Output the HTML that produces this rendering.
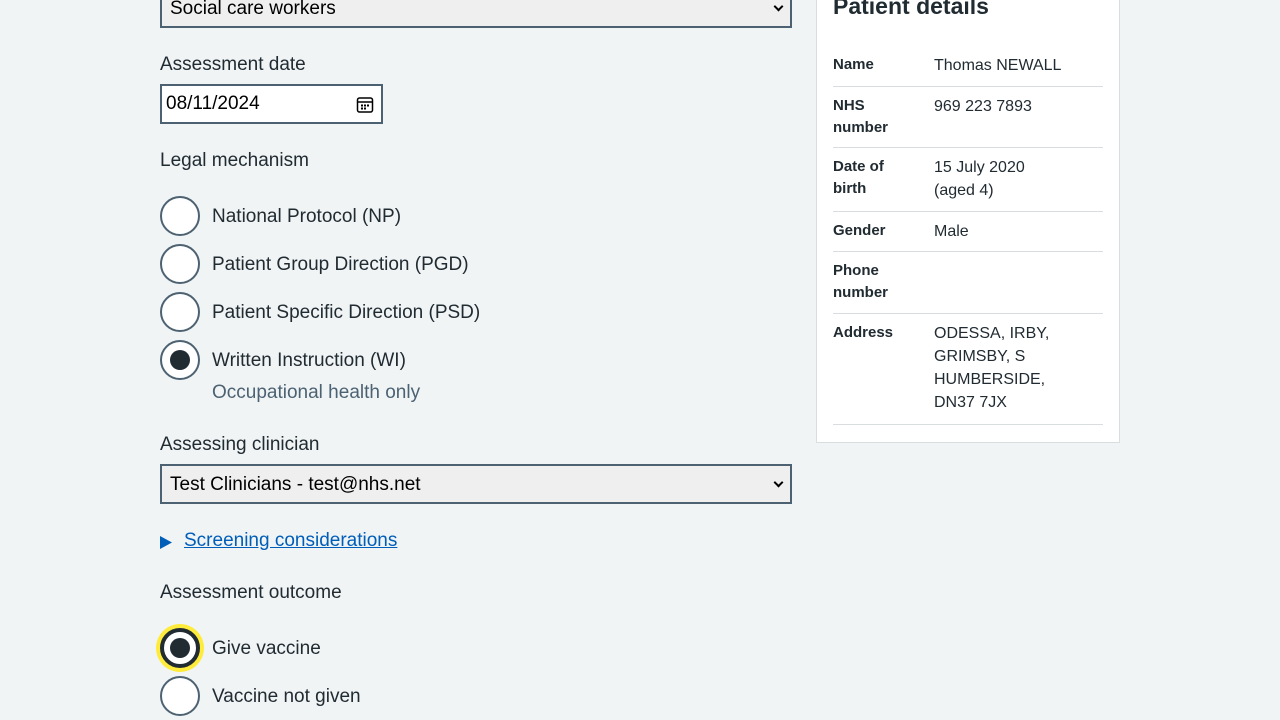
<!DOCTYPE html>
<html><head><meta charset="utf-8"><style>
*{margin:0;padding:0;box-sizing:border-box}
body{width:1280px;height:720px;background:#f0f4f5;font-family:"Liberation Sans",sans-serif;color:#212b32;position:relative;overflow:hidden}
.a{position:absolute;white-space:nowrap}
.lbl{font-size:19px}
.sel{position:absolute;left:160px;width:632px;height:40px;border:2px solid #4c6272;background:#efefef;font-size:19px;padding:8px 8px;color:#000}
.sel:after{content:"";position:absolute;right:8px;top:13px;width:5px;height:5px;border-right:2px solid #000;border-bottom:2px solid #000;transform:rotate(45deg)}
.r{position:absolute;left:160px;width:40px;height:40px;border:2px solid #4c6272;border-radius:50%;background:#fff}
.r.on:after{content:"";position:absolute;left:8px;top:8px;width:20px;height:20px;border-radius:50%;background:#212b32}
.rl{position:absolute;left:212px;font-size:19px;white-space:nowrap}
.panel{position:absolute;left:816px;top:-20px;width:304px;height:463px;background:#fff;border:1px solid #d8dde0}
.row{position:absolute;left:833px;width:270px;border-bottom:1px solid #d8dde0}
.k{position:absolute;left:833px;font-size:15px;font-weight:bold;line-height:22px}
.v{position:absolute;left:934px;font-size:16px;line-height:23px}
</style></head><body>
<div class="sel" style="top:-12px">Social care workers</div>
<div class="a lbl" style="left:160px;top:54px">Assessment date</div>
<div class="a" style="left:160px;top:84px;width:223px;height:40px;border:2px solid #4c6272;background:#fff;font-size:19px;padding:7px 4px;color:#000">08/11/2024
<svg style="position:absolute;right:7px;top:10px" width="18" height="18" viewBox="0 0 18 18"><rect x="1.5" y="2" width="15" height="14" rx="2" fill="none" stroke="#000" stroke-width="1.5"/><line x1="2" y1="6" x2="16" y2="6" stroke="#000" stroke-width="1.5"/><g fill="#000"><rect x="5" y="8.5" width="2" height="2"/><rect x="8" y="8.5" width="2" height="2"/><rect x="11" y="8.5" width="2" height="2"/><rect x="5" y="11.5" width="2" height="2"/><rect x="8" y="11.5" width="2" height="2"/></g></svg></div>
<div class="a lbl" style="left:160px;top:150px">Legal mechanism</div>
<div class="r" style="top:196px"></div><div class="rl" style="top:206px">National Protocol (NP)</div>
<div class="r" style="top:244px"></div><div class="rl" style="top:254px">Patient Group Direction (PGD)</div>
<div class="r" style="top:292px"></div><div class="rl" style="top:302px">Patient Specific Direction (PSD)</div>
<div class="r on" style="top:340px"></div><div class="rl" style="top:350px">Written Instruction (WI)</div>
<div class="rl" style="top:382px;color:#4c6272">Occupational health only</div>
<div class="a lbl" style="left:160px;top:434px">Assessing clinician</div>
<div class="sel" style="top:464px">Test Clinicians - test@nhs.net</div>
<svg class="a" style="left:160px;top:536px" width="12" height="13"><path d="M0 0L12 6.5L0 13Z" fill="#005eb8"/></svg>
<div class="a" style="left:184px;top:530px;font-size:19px;color:#005eb8;text-decoration:underline">Screening considerations</div>
<div class="a lbl" style="left:160px;top:582px">Assessment outcome</div>
<div class="a" style="left:160px;top:628px;width:40px;height:40px;border-radius:50%;background:#fff;border:4px solid #212b32;box-shadow:0 0 0 4px #ffeb3b"><span style="position:absolute;left:6px;top:6px;width:20px;height:20px;border-radius:50%;background:#212b32"></span></div>
<div class="rl" style="top:638px">Give vaccine</div>
<div class="r" style="top:676px"></div><div class="rl" style="top:686px">Vaccine not given</div>

<div class="panel"></div>
<div class="a" style="left:833px;top:-7px;font-size:23px;font-weight:bold">Patient details</div>
<div class="k" style="top:54px">Name</div><div class="v" style="top:54px">Thomas NEWALL</div>
<div class="row" style="top:86px"></div>
<div class="k" style="top:95px">NHS<br>number</div><div class="v" style="top:95px">969 223 7893</div>
<div class="row" style="top:147px"></div>
<div class="k" style="top:156px">Date of<br>birth</div><div class="v" style="top:156px">15 July 2020<br>(aged 4)</div>
<div class="row" style="top:211px"></div>
<div class="k" style="top:220px">Gender</div><div class="v" style="top:220px">Male</div>
<div class="row" style="top:251px"></div>
<div class="k" style="top:260px">Phone<br>number</div>
<div class="row" style="top:313px"></div>
<div class="k" style="top:322px">Address</div><div class="v" style="top:322px">ODESSA, IRBY,<br>GRIMSBY, S<br>HUMBERSIDE,<br>DN37 7JX</div>
<div class="row" style="top:424px"></div>
</body></html>
